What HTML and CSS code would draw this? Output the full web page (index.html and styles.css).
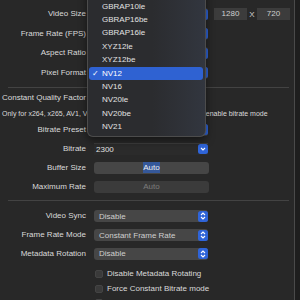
FILE: index.html
```html
<!DOCTYPE html>
<html lang="en">
<head>
    <meta charset="UTF-8">
    <title>Video Settings</title>
    <link rel="stylesheet" href="styles.css">
</head>
<body>
    <div class="window">
        <div class="group top-group">
            <div class="row">
                <span class="label">Video Size</span>
                <div class="controls">
                    <div class="popup"><span>Custom</span><i class="stepper"><svg width="8" height="10" viewBox="0 0 8 10"><path d="M2 4 L4 2 L6 4 M2 6 L4 8 L6 6"/></svg></i></div>
                    <span class="num">1280</span>
                    <span class="times">X</span>
                    <span class="num">720</span>
                </div>
            </div>
            <div class="row">
                <span class="label">Frame Rate (FPS)</span>
                <div class="controls">
                    <div class="popup"><span>30</span><i class="stepper"><svg width="8" height="10" viewBox="0 0 8 10"><path d="M2 4 L4 2 L6 4 M2 6 L4 8 L6 6"/></svg></i></div>
                </div>
            </div>
            <div class="row">
                <span class="label">Aspect Ratio</span>
                <div class="controls">
                    <div class="popup"><span>16:9</span><i class="stepper"><svg width="8" height="10" viewBox="0 0 8 10"><path d="M2 4 L4 2 L6 4 M2 6 L4 8 L6 6"/></svg></i></div>
                </div>
            </div>
            <div class="row">
                <span class="label">Pixel Format</span>
                <div class="controls">
                    <div class="popup"><span>NV12</span><i class="stepper"><svg width="8" height="10" viewBox="0 0 8 10"><path d="M2 4 L4 2 L6 4 M2 6 L4 8 L6 6"/></svg></i></div>
                </div>
            </div>
        </div>

        <div class="separator"></div>

        <div class="group bitrate-group">
            <div class="row">
                <span class="label">Constant Quality Factor</span>
                <div class="controls">
                    <div class="slider"><span class="knob"></span></div>
                </div>
            </div>
            <p class="note">Only for x264, x265, AV1, VP9, VVC. Set Constant Quality to 0 to enable bitrate mode</p>
            <div class="row">
                <span class="label">Bitrate Preset</span>
                <div class="controls">
                    <div class="popup"><span>Custom</span><i class="stepper"><svg width="8" height="10" viewBox="0 0 8 10"><path d="M2 4 L4 2 L6 4 M2 6 L4 8 L6 6"/></svg></i></div>
                </div>
            </div>
            <div class="row step">
                <span class="label">Bitrate</span>
                <div class="controls">
                    <div class="combo"><span>2300</span><i class="drop"><svg width="8" height="8" viewBox="0 0 8 8"><path d="M2 3 L4 5 L6 3"/></svg></i></div>
                </div>
            </div>
            <div class="row step">
                <span class="label">Buffer Size</span>
                <div class="controls">
                    <div class="field"><span class="selected">Auto</span></div>
                </div>
            </div>
            <div class="row step">
                <span class="label">Maximum Rate</span>
                <div class="controls">
                    <div class="field disabled"><span>Auto</span></div>
                </div>
            </div>
        </div>

        <div class="separator second"></div>

        <div class="group sync-group">
            <div class="row">
                <span class="label">Video Sync</span>
                <div class="controls">
                    <div class="popup"><span>Disable</span><i class="stepper"><svg width="8" height="10" viewBox="0 0 8 10"><path d="M2 4 L4 2 L6 4 M2 6 L4 8 L6 6"/></svg></i></div>
                </div>
            </div>
            <div class="row tight">
                <span class="label">Frame Rate Mode</span>
                <div class="controls">
                    <div class="popup"><span>Constant Frame Rate</span><i class="stepper"><svg width="8" height="10" viewBox="0 0 8 10"><path d="M2 4 L4 2 L6 4 M2 6 L4 8 L6 6"/></svg></i></div>
                </div>
            </div>
            <div class="row tight">
                <span class="label">Metadata Rotation</span>
                <div class="controls">
                    <div class="popup"><span>Disable</span><i class="stepper"><svg width="8" height="10" viewBox="0 0 8 10"><path d="M2 4 L4 2 L6 4 M2 6 L4 8 L6 6"/></svg></i></div>
                </div>
            </div>
            <div class="checks">
                <div class="check"><span class="box"></span>Disable Metadata Rotating</div>
                <div class="check"><span class="box"></span>Force Constant Bitrate mode</div>
                <div class="check"><span class="box"></span>Use Hardware Encoder</div>
            </div>
        </div>

        <ul class="menu">
            <li>GBRAP</li>
            <li>GBRAP10be</li>
            <li>GBRAP10le</li>
            <li>GBRAP16be</li>
            <li>GBRAP16le</li>
            <li>XYZ12le</li>
            <li>XYZ12be</li>
            <li class="active"><span class="tick">✓</span>NV12</li>
            <li>NV16</li>
            <li>NV20le</li>
            <li>NV20be</li>
            <li>NV21</li>
        </ul>
    </div>
</body>
</html>
```

FILE: styles.css
```css
body {
    margin: 0;
    background-color: #1e1e1e;
    font-family: "Liberation Sans", Arial, sans-serif;
    font-size: 8px;
    color: #dadada;
}
.window {
    position: relative;
    width: 294px;
    height: 300px;
    overflow: hidden;
    background-color: #282828;
    border-right: 1px solid #4a4a4a;
}
.row {
    display: grid;
    grid-template-columns: 86px 1fr;
    column-gap: 8px;
    align-items: center;
    height: 12px;
}
.label {
    text-align: right;
    white-space: nowrap;
    line-height: 12px;
}
.controls {
    display: flex;
    align-items: center;
}
.top-group {
    padding-top: 8px;
}
.top-group .row + .row {
    margin-top: 7.6px;
}
.separator {
    height: 1px;
    margin: 8.2px 0 0 8px;
    width: 281px;
    background-color: #434343;
}
.separator.second {
    margin-top: 7.5px;
}
.popup {
    display: flex;
    align-items: center;
    justify-content: space-between;
    box-sizing: border-box;
    width: 114px;
    height: 12px;
    padding-left: 5px;
    border-radius: 3px;
    background-color: #464646;
    color: #cfcfcf;
}
.stepper,
.drop {
    display: flex;
    align-items: center;
    justify-content: center;
    width: 9.5px;
    height: 11px;
    margin-right: 0.5px;
    border-radius: 2.5px;
    background-color: #2f64d8;
}
.stepper svg path,
.drop svg path {
    fill: none;
    stroke: #fff;
    stroke-width: 1.1;
}
.num {
    box-sizing: border-box;
    width: 33px;
    height: 12px;
    margin-left: 6px;
    text-align: center;
    line-height: 12px;
    background-color: #3c3c3c;
    color: #cfcfcf;
}
.times {
    width: 10px;
    text-align: center;
    color: #cfcfcf;
}
.times + .num {
    margin-left: 0;
}
.bitrate-group .row:first-child {
    margin-top: 4px;
}
.slider {
    position: relative;
    width: 110px;
    height: 3px;
    border-radius: 2px;
    background-color: #4a4a4a;
}
.note {
    margin: 5px 0 0 2px;
    font-size: 7px;
    line-height: 10px;
    white-space: nowrap;
}
.note + .row {
    margin-top: 5px;
}
.row.step {
    margin-top: 7px;
}
.combo {
    display: flex;
    align-items: center;
    justify-content: space-between;
    box-sizing: border-box;
    width: 114px;
    height: 12px;
    padding-left: 2px;
    border-top: 1px solid #3c3c3c;
    background-color: #2b2b2b;
    color: #e2e2e2;
}
.combo .drop {
    height: 10px;
}
.field {
    box-sizing: border-box;
    width: 115px;
    height: 12px;
    border-radius: 3px;
    text-align: center;
    line-height: 12px;
    background-color: #464646;
    color: #f0f0f0;
}
.field .selected {
    background-color: #35589a;
    padding: 1px 0.5px;
}
.field.disabled {
    background-color: #3b3b3b;
    color: #7c7c7c;
}
.sync-group {
    padding-top: 9px;
}
.row.tight {
    margin-top: 6.7px;
}
.checks {
    display: flex;
    flex-direction: column;
    gap: 4.7px;
    margin-top: 9px;
    padding-left: 95px;
}
.check {
    display: flex;
    align-items: center;
    gap: 4px;
    height: 10px;
    white-space: nowrap;
}
.box {
    box-sizing: border-box;
    width: 8px;
    height: 8px;
    border-radius: 2px;
    background-color: #3a3a3a;
    border: 1px solid #444;
}
.menu {
    position: absolute;
    left: 87px;
    top: -30px;
    width: 119px;
    box-sizing: border-box;
    margin: 0;
    padding: 3px 0;
    list-style: none;
    border: 1px solid #4c4c4c;
    border-top: none;
    border-radius: 0 0 6px 6px;
    background: linear-gradient(to right, #2b2c2f 55%, #32363f);
    box-shadow: 0 3px 8px rgba(0, 0, 0, 0.5);
    color: #e2e2e2;
}
.menu li {
    position: relative;
    height: 13.36px;
    line-height: 13.36px;
    margin: 0 2px 0 1px;
    padding-left: 13px;
    border-radius: 3px;
    white-space: nowrap;
}
.menu li.active {
    background-color: #2f62d2;
    color: #fff;
}
.tick {
    position: absolute;
    left: 3px;
    font-size: 8px;
}
```
